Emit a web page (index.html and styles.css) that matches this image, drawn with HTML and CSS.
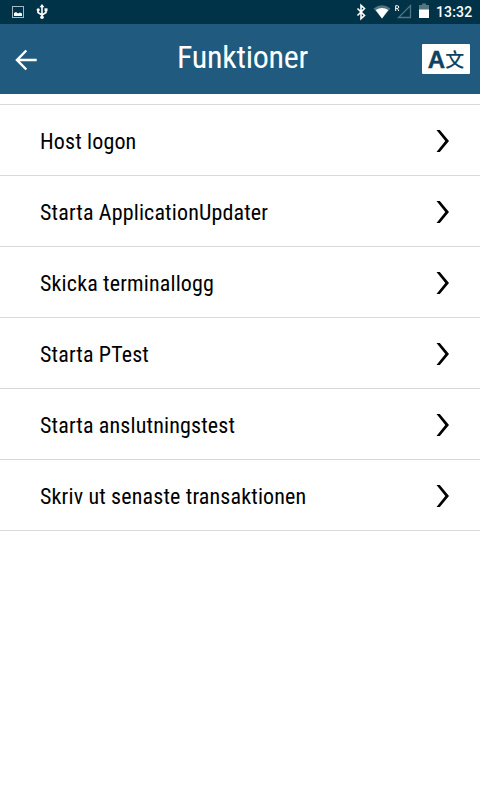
FILE: index.html
```html
<!DOCTYPE html>
<html lang="sv">
<head>
<meta charset="utf-8">
<title>Funktioner</title>
<link rel="stylesheet" href="styles.css">
</head>
<body>
<div class="status">
  <svg class="status-icons" width="60" height="24" viewBox="0 0 60 24">
    <rect x="12.500" y="6.500" width="11" height="11" fill="none" stroke="#a9b9c1"/>
    <path d="M14 16V13l2-1 2 1.500 2-1 2 1V16z" fill="#fff"/>
    <path d="M42 6v12M38 9.500v3l4 2.500 4-2.500v-3" fill="none" stroke="#fff" stroke-width="1.600"/>
    <path d="M42 4l2.400 3.200h-4.800z" fill="#fff"/><circle cx="42" cy="17.200" r="1.800" fill="#fff"/><circle cx="38.200" cy="9.800" r="1.600" fill="#fff"/><path d="M44.500 8.300h3v3h-3z" fill="#fff"/>
  </svg>
  <svg class="status-icons" width="84" height="24" viewBox="350 0 84 24">
    <path d="M357.500 8.500l7 7-3.500 3.200V5.300l3.500 3.200-7 7" fill="none" stroke="#fff" stroke-width="1.600"/>
    <path d="M373.500 8.500Q382 1.800 390.500 8.500L382 18.500z" fill="#547480"/>
    <path d="M375.700 10Q382 6 388.300 10L382 18.500z" fill="#fff"/>
    <path d="M410.500 5.500v12h-12z" fill="none" stroke="#547480" stroke-width="1.300"/>
    <path d="M395.700 11V5.700h1.700a1.300 1.300 0 0 1 0 2.700h-1.700m1.700 0l1.400 2.600" fill="none" stroke="#fff" stroke-width="1"/>
    <path d="M419 5h3V3.500h4V5h3v5h-10z" fill="#547480"/><path d="M419 9.500h10V18h-10z" fill="#fff"/>
  </svg>
  <span class="clock">13:32</span>
</div>
<header class="bar">
  <svg class="back" width="22" height="22" viewBox="15 49 22 22"><path d="M36.700 60H17M26.300 50.500L17 60l9.300 9.500" fill="none" stroke="#fff" stroke-width="2.500"/></svg>
  <h1 class="title">Funktioner</h1>
  <div class="lang"><span class="latin">A</span><span class="han">文</span></div>
</header>
<ul class="list">
  <li class="row"><span>Host logon</span><svg class="chev" width="14" height="24" viewBox="0 0 14 24"><path d="M.5 1h3.300L13 12 3.800 23H.5L9.300 12z"/></svg></li>
  <li class="row"><span>Starta ApplicationUpdater</span><svg class="chev" width="14" height="24" viewBox="0 0 14 24"><path d="M.5 1h3.300L13 12 3.800 23H.5L9.300 12z"/></svg></li>
  <li class="row"><span>Skicka terminallogg</span><svg class="chev" width="14" height="24" viewBox="0 0 14 24"><path d="M.5 1h3.300L13 12 3.800 23H.5L9.300 12z"/></svg></li>
  <li class="row"><span>Starta PTest</span><svg class="chev" width="14" height="24" viewBox="0 0 14 24"><path d="M.5 1h3.300L13 12 3.800 23H.5L9.300 12z"/></svg></li>
  <li class="row"><span>Starta anslutningstest</span><svg class="chev" width="14" height="24" viewBox="0 0 14 24"><path d="M.5 1h3.300L13 12 3.800 23H.5L9.300 12z"/></svg></li>
  <li class="row"><span>Skriv ut senaste transaktionen</span><svg class="chev" width="14" height="24" viewBox="0 0 14 24"><path d="M.5 1h3.300L13 12 3.800 23H.5L9.300 12z"/></svg></li>
</ul>
</body>
</html>
```
FILE: styles.css
```css
* { box-sizing: border-box; }
body { margin: 0; background: #fff; font-family: "Roboto Condensed", Roboto, sans-serif; font-stretch: 75%; color: #000; }
.status { height: 24px; background: #003347; display: flex; align-items: center; }
.status-icons { flex: none; display: block; }
.status-icons + .status-icons { margin-left: 290px; }
.clock { margin-left: 2px; color: #fff; font: 500 14px/24px Roboto, sans-serif; font-stretch: 100%; letter-spacing: 0.15px; }
.bar { height: 70px; background: #205b7f; display: flex; align-items: center; justify-content: space-between; padding: 0 10px 0 15px; }
.back { margin-top: 2px; width: 22px; margin-right: 26px; }
.title { margin: 0; padding-bottom: 5px; font-size: 32px; line-height: 38px; font-weight: 400; letter-spacing: -0.25px; color: #fff; }
.lang { width: 48px; height: 30px; background: #fff; color: #0f4260; display: flex; align-items: center; justify-content: center; border-radius: 1px; }
.latin { font: 700 24px/30px "Liberation Sans", sans-serif; padding-top: 2px; -webkit-text-stroke: 0.4px #0f4260; }
.han { font: 500 19px/30px "Noto Sans CJK SC", sans-serif; }
.list { list-style: none; margin: 10px 0 0; padding: 0; border-top: 1px solid #d9d9d9; }
.row { height: 71px; border-bottom: 1px solid #d9d9d9; display: flex; align-items: center; justify-content: space-between; padding: 0 30px 0 40px; font-size: 22px; letter-spacing: 0.15px; line-height: 28px; }
.row span { padding-top: 4px; }
.chev { display: block; margin-top: 2px; }
```
